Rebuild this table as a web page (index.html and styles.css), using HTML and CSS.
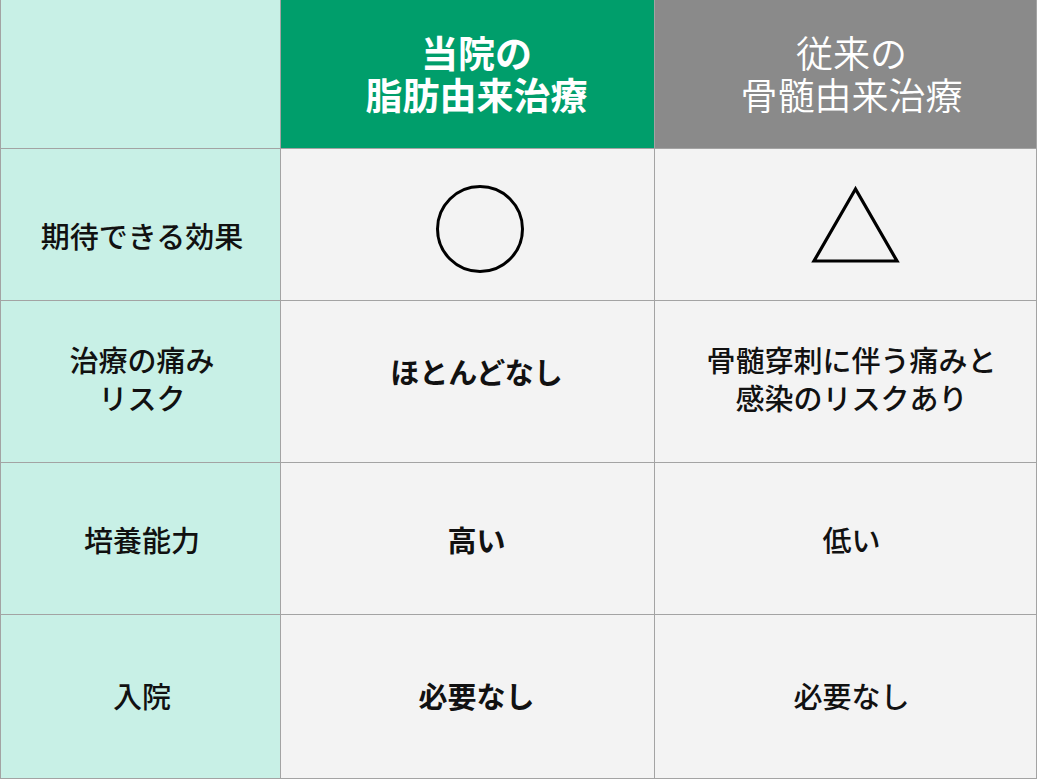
FILE: index.html
```html
<!DOCTYPE html>
<html lang="ja">
<head>
<meta charset="utf-8">
<title>比較表</title>
<link rel="stylesheet" href="styles.css">
</head>
<body>
<div class="table">
  <div class="cell label head-blank"></div>
  <div class="cell head ours"><span>当院の<br>脂肪由来治療</span></div>
  <div class="cell head theirs"><span>従来の<br>骨髄由来治療</span></div>

  <div class="cell label row-effect">期待できる効果</div>
  <div class="cell body ours">
    <svg class="mark circle" width="92" height="92" viewBox="0 0 92 92"><circle cx="46" cy="46" r="42.5" fill="none" stroke="#000" stroke-width="3"/></svg>
  </div>
  <div class="cell body theirs">
    <svg class="mark tri" width="92" height="84" viewBox="0 0 92 84"><polygon points="44.5,6 3,78 86,78" fill="none" stroke="#000" stroke-width="3.2"/></svg>
  </div>

  <div class="cell label row-risk">治療の痛み<br>リスク</div>
  <div class="cell body ours strong row-risk-ours">ほとんどなし</div>
  <div class="cell body theirs row-risk">骨髄穿刺に伴う痛みと<br>感染のリスクあり</div>

  <div class="cell label">培養能力</div>
  <div class="cell body ours strong">高い</div>
  <div class="cell body theirs">低い</div>

  <div class="cell label row-stay">入院</div>
  <div class="cell body ours strong row-stay">必要なし</div>
  <div class="cell body theirs row-stay">必要なし</div>
</div>
</body>
</html>
```

FILE: styles.css
```css
html, body {
  margin: 0;
  padding: 0;
  background: #ffffff;
}

body {
  font-family: "Noto Sans CJK JP", "Noto Sans", sans-serif;
  color: #111111;
}

.table {
  display: grid;
  grid-template-columns: 279px 373px 381px;
  grid-template-rows: 148px 151px 161px 151px 163px;
  gap: 1px;
  padding: 0 1px 1px 1px;
  background: #a3a3a3;
  width: 1035px;
}

.cell {
  display: flex;
  align-items: center;
  justify-content: center;
  text-align: center;
  font-size: 29px;
  line-height: 38px;
  font-weight: 500;
}

.label {
  background: #c8f0e6;
  padding-left: 3px;
}

.body {
  background: #f3f3f3;
}

.body.ours {
  padding-left: 18px;
}

.body.theirs {
  padding-left: 12px;
}

.strong {
  font-weight: 700;
}

.row-effect {
  padding-top: 20px;
}

.row-risk {
  padding-bottom: 8px;
}

.row-risk-ours {
  padding-bottom: 22px;
}

.row-stay {
  padding-bottom: 4px;
}

.head {
  color: #ffffff;
  font-size: 37px;
  line-height: 42px;
  padding-bottom: 2px;
}

.head.ours {
  background: #009e6b;
  font-weight: 700;
  padding-left: 18px;
}

.head.theirs {
  background: #8a8a8a;
  font-weight: 350;
  padding-left: 12px;
}

.mark {
  display: block;
}

.circle {
  margin-left: 6px;
  margin-top: 8px;
}

.tri {
  margin-left: 10px;
  margin-top: 0;
}
```
